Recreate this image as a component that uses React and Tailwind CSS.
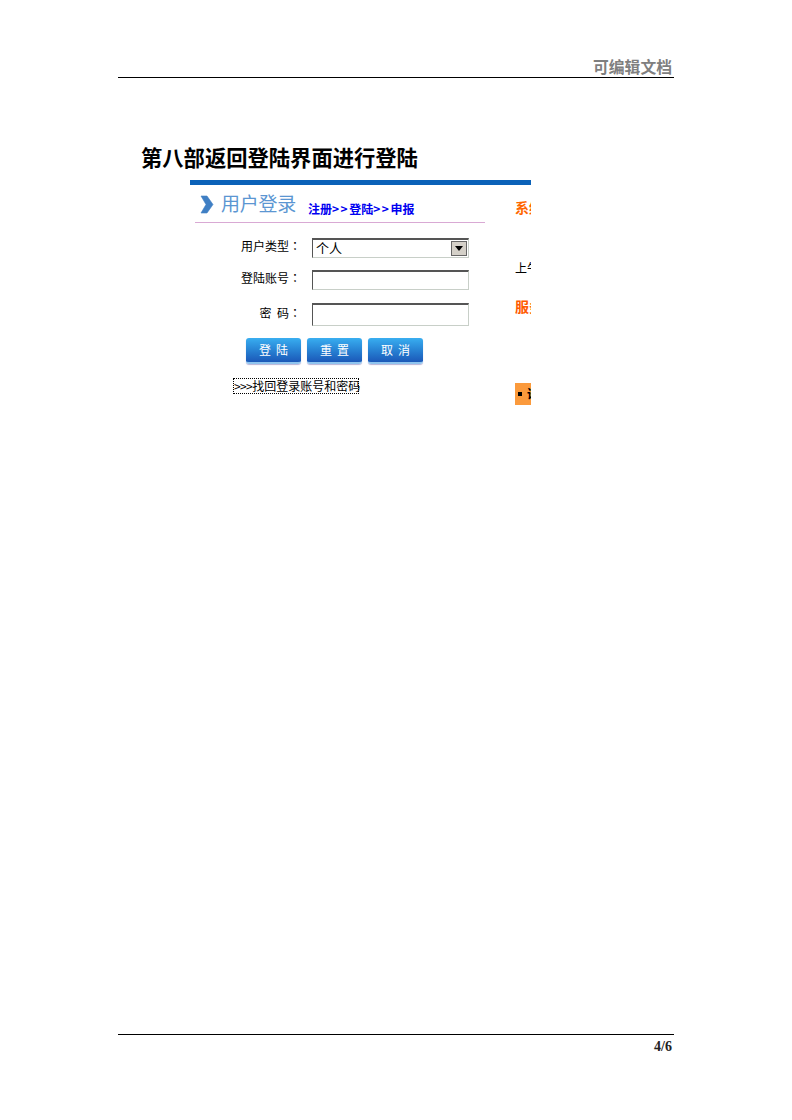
import React from "react";

const CJK = "font-['Liberation_Serif','Noto_Sans_CJK_SC',serif]";
const UI = "font-['Noto_Sans_CJK_SC','Liberation_Sans',sans-serif]";

function FormRow({ label, height, className = "", children }) {
  return (
    <div className={`flex items-center ${className}`}>
      <span className="w-[111px] pb-[4px] text-right font-['Noto_Sans_CJK_TC','Liberation_Sans',sans-serif] text-[12px] leading-none text-black whitespace-pre">
        {label}
      </span>
      <div className={`ml-[11px] w-[157px] ${height} border border-[#c8cfc8] border-l-[#555] border-t-2 border-t-[#555] bg-white`}>
        {children}
      </div>
    </div>
  );
}

function BlueButton({ children }) {
  return (
    <button className="h-[26px] w-[55px] rounded-[3px] border-b-2 border-b-[#8fc4ee] bg-gradient-to-b from-[#39aef0] to-[#1c58b8] pb-[1px] pl-[5px] text-[12px] leading-none tracking-[5px] text-white shadow-[0_1px_1px_#b9b4d8]">
      {children}
    </button>
  );
}

export default function App() {
  return (
    <div className={`min-h-[1120px] w-[792px] bg-white pl-[118px] ${CJK}`}>
      <div className="w-[556px]">
        {/* Page header */}
        <div className="flex h-[78px] items-end justify-end border-b border-b-black pr-[2px]">
          <span className="text-[15.8px] leading-[18px] font-bold text-[#7f7f7f]">可编辑文档</span>
        </div>

        {/* Title */}
        <h1 className="mt-[68px] ml-[23px] text-[21.3px] leading-[26px] font-bold text-black">
          第八部返回登陆界面进行登陆
        </h1>

        {/* Pasted screenshot */}
        <div className={`mt-[8px] ml-[72px] h-[228px] w-[341px] overflow-hidden bg-white ${UI}`}>
          <div className="h-[5px] bg-[#0b62b8]" />
          <div className="flex">
            <div className="w-[325px] shrink-0">
              <div className="ml-[5px] flex h-[38px] w-[290px] items-start border-b border-b-[#d9a9d4]">
                <svg className="mt-[10px] ml-[5px]" width="14" height="19" viewBox="0 0 14 19">
                  <path d="M1 1h6l6 8.5-6 8.5H1l5-8.5z" fill="#3f7fc4" stroke="#3f7fc4" strokeWidth="0.6" strokeLinejoin="round" />
                </svg>
                <span className="mt-[6px] ml-[7px] text-[19px] leading-[24px] tracking-[-0.25px] text-[#5b96d2]">用户登录</span>
                <span className="mt-[15px] ml-[12px] text-[12px] leading-[18px] font-bold text-[#0000f0]">
                  注册<span className="tracking-[1.5px]">&gt;&gt;</span>登陆<span className="tracking-[1.5px]">&gt;&gt;</span>申报
                </span>
              </div>

              <FormRow label="用户类型：" height="h-[20px]" className="mt-[15px]">
                <div className="flex h-full items-center justify-between pl-[3px] pr-[1px]">
                  <span className="pb-[3px] text-[13px] leading-none text-black">个人</span>
                  <span className="flex h-[15px] w-[16px] items-center justify-center border border-[#666] bg-[#d4d0c8]">
                    <svg width="8" height="5" viewBox="0 0 8 5">
                      <path d="M0 0h8L4 5z" fill="#000" />
                    </svg>
                  </span>
                </div>
              </FormRow>
              <FormRow label="登陆账号：" height="h-[20px]" className="mt-[12px]" />
              <FormRow label="密  码：" height="h-[23px]" className="mt-[13px]" />

              <div className="mt-[12px] ml-[56px] flex gap-[6px]">
                <BlueButton>登陆</BlueButton>
                <BlueButton>重置</BlueButton>
                <BlueButton>取消</BlueButton>
              </div>

              <div className="mt-[14px] ml-[43px] h-[16px] w-[126px] border border-dotted border-black text-[12px] leading-[13px] whitespace-nowrap text-black">
                <span className="tracking-[-0.6px]">&gt;&gt;&gt;</span>找回登录账号和密码
              </div>
            </div>

            {/* Clipped right column */}
            <div className="w-[16px] shrink-0 overflow-hidden">
              <div className="mt-[13px] text-[14px] leading-[18px] font-bold whitespace-nowrap text-[#ff6600]">系统公告</div>
              <div className="mt-[44px] text-[12px] leading-[16px] whitespace-nowrap text-black">上午好</div>
              <div className="mt-[21px] text-[14px] leading-[18px] font-bold whitespace-nowrap text-[#ff5a00]">服务指南</div>
              <div className="mt-[68px] flex h-[22px] w-[16px] items-center bg-[#fb9a3c] pl-[3px] text-[12px] leading-none font-bold whitespace-nowrap text-black">
                <span className="h-[4px] w-[4px] shrink-0 bg-black" />
                <span className="ml-[5px] shrink-0">语言</span>
              </div>
            </div>
          </div>
        </div>

        {/* Page footer */}
        <div className="mt-[626px] border-t border-t-black pt-[4px] pr-[2px] text-right text-[14px] leading-[16px] font-bold text-[#222]">
          4/6
        </div>
      </div>
    </div>
  );
}
